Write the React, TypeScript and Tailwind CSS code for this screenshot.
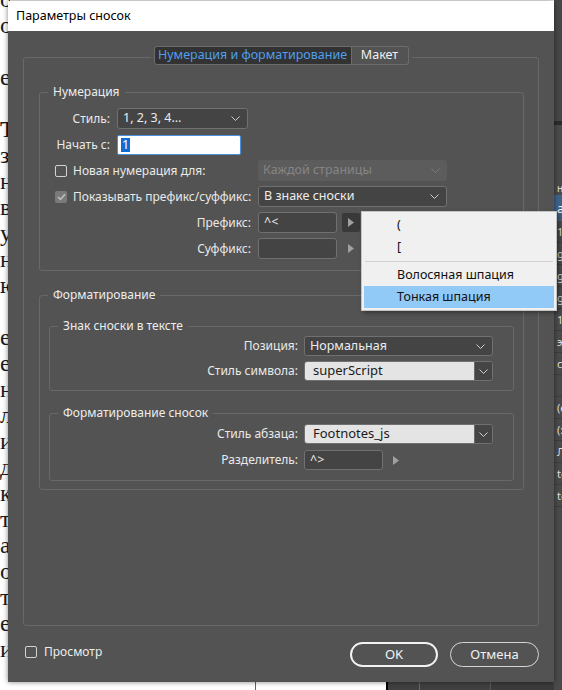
import React from "react";

const FONT = "font-['Noto_Sans','Liberation_Sans',sans-serif]";

function Chevron({ className = "" }: { className?: string }) {
  return (
    <svg width="9" height="5" viewBox="0 0 9 5" className={className}>
      <path d="M0.5 0.5 L4.5 4.5 L8.5 0.5" fill="none" stroke="currentColor" strokeWidth="1" />
    </svg>
  );
}

function Tri({ className = "" }: { className?: string }) {
  return (
    <svg width="6" height="9" viewBox="0 0 6 9" className={className}>
      <path d="M0 0 L6 4.5 L0 9Z" fill="currentColor" />
    </svg>
  );
}

function Select({ value, w, h = "h-[21px]" }: { value: string; w: string; h?: string }) {
  return (
    <div
      className={`${w} ${h} flex items-center justify-between rounded-[3px] border border-[#707070] bg-[#444444] pl-[5px] pr-[7px] text-[#ececec] text-[12.5px]`}
    >
      <span className="whitespace-nowrap">{value}</span>
      <Chevron className="text-[#cfcfcf]" />
    </div>
  );
}

function Combo({ value }: { value: string }) {
  return (
    <div className="w-[189px] h-[20px] flex rounded-[3px] border border-[#707070] overflow-hidden">
      <div className="flex-1 bg-[#e4e4e4] pl-[8px] flex items-center text-[#1b1b1b] text-[13px] whitespace-nowrap">{value}</div>
      <div className="w-[18px] bg-[#454545] border-l border-[#6a6a6a] flex items-center justify-center">
        <Chevron className="text-[#cfcfcf]" />
      </div>
    </div>
  );
}

function Field({ value, w }: { value: string; w: string }) {
  return (
    <div className={`${w} h-[21px] flex items-center rounded-[3px] border border-[#707070] bg-[#444444] pl-[5px] text-[#ececec] text-[12.5px]`}>
      {value}
    </div>
  );
}

function Legend({ children }: { children: React.ReactNode }) {
  return (
    <div className="self-start -mt-[9px] ml-[8px] px-[5px] h-[16px] leading-[16px] bg-[#535353] text-[#ededed] whitespace-nowrap">
      {children}
    </div>
  );
}

function Checkbox({ checked = false }: { checked?: boolean }) {
  if (checked) {
    return (
      <div className="w-[12px] h-[12px] shrink-0 rounded-[2px] bg-[#7a7a7a] flex items-center justify-center">
        <svg width="9" height="8" viewBox="0 0 9 8">
          <path d="M1 4 L3.5 6.5 L8 1.2" fill="none" stroke="#c4c4c4" strokeWidth="1.4" />
        </svg>
      </div>
    );
  }
  return <div className="w-[12px] h-[12px] shrink-0 rounded-[2px] border border-[#d2d2d2]" />;
}

const leftLines: { t: string; bold?: boolean }[] = [
  { t: "о" },
  { t: "о" },
  { t: "" },
  { t: "е" },
  { t: "" },
  { t: "Т", bold: true },
  { t: "з" },
  { t: "н" },
  { t: "в" },
  { t: "у" },
  { t: "н" },
  { t: "ю" },
  { t: "" },
  { t: "е" },
  { t: "е" },
  { t: "н" },
  { t: "л" },
  { t: "и" },
  { t: "д" },
  { t: "к" },
  { t: "т" },
  { t: "а" },
  { t: "о" },
  { t: "т" },
  { t: "е" },
  { t: "и" },
  { t: "" },
];

export default function App() {
  return (
    <div className={`relative w-[562px] h-[690px] overflow-hidden bg-white ${FONT} text-[12px]`}>
      {/* background: document text on the left */}
      <div className="absolute left-0 top-0 w-[10px] h-[690px] overflow-hidden font-['Liberation_Serif',serif] text-[24px] text-[#1c1c1c]">
        <div className="-mt-[14px] flex flex-col">
          {leftLines.map((l, i) => (
            <div key={i} className={`h-[26px] leading-[26px] ${l.bold ? "font-bold" : ""}`}>
              {l.t || "\u00a0"}
            </div>
          ))}
        </div>
      </div>

      {/* background: bottom strip */}
      <div className="absolute left-[255px] top-[676px] w-[1px] h-[14px] bg-[#8b3cc8]" />
      <div className="absolute left-[386px] top-[600px] w-[176px] h-[90px] flex border-l-2 border-black bg-[#404040]">
        <div className="w-[31px]" />
        <div className="w-[1px] bg-[#d23a3a]" />
        <div className="w-[70px]" />
        <div className="flex-1 border-l border-[#5a5a5a] bg-[#3b3b3b]" />
      </div>

      {/* background: right panel */}
      <div className="absolute left-[554px] top-0 w-[8px] h-[690px] flex flex-col bg-[#4a4a4a] text-[11px] text-[#dedede] overflow-hidden">
        <div className="h-[121px] bg-[#474747]" />
        <div className="h-[4px] bg-[#2b2b2b]" />
        <div className="h-[57px]" />
        <div className="h-[13px] pl-[3px] leading-[13px] text-[10px]">н</div>
        <div className="h-[26px] bg-[#3f6289] pl-[3px] leading-[26px] text-[13px] text-white">al</div>
        {["1", "g", "g", "g", "1", "эф", "сı", "", "(е", "(:", "Ле", "te", "te"].map((t, i) => (
          <div key={i} className="h-[22px] leading-[22px] pl-[3px] border-b border-[#3c3c3c]">
            {t}
          </div>
        ))}
      </div>

      {/* dialog */}
      <div className="absolute left-[8px] top-[1px] w-[546px] h-[681px] flex flex-col shadow-[0_0_5px_rgba(0,0,0,0.5)]">
        <div className="h-[30px] bg-white flex items-center pl-[8px] text-[12.5px] text-black">Параметры сносок</div>
        <div className="flex-1 bg-[#535353] px-[15px] flex flex-col">
          {/* tab panel */}
          <div className="mt-[26px] h-[569px] rounded-[3px] border border-[#686868] flex flex-col">
            <div className="self-center -mt-[12px] px-[3px] bg-[#535353] flex">
              <div className="w-[198px] h-[19px] flex items-center justify-center rounded-l-[3px] border border-[#6c6c6c] bg-[#323232] text-[#4f9fec] text-[12.5px] whitespace-nowrap">
                Нумерация и форматирование
              </div>
              <div className="w-[57px] h-[19px] flex items-center justify-center rounded-r-[3px] border border-l-0 border-[#6c6c6c] text-[#f0f0f0] text-[12.5px]">
                Макет
              </div>
            </div>

            {/* Нумерация */}
            <div className="mt-[27px] ml-[15px] mr-[14px] rounded-[3px] border border-[#686868] flex flex-col pb-[11px]">
              <Legend>Нумерация</Legend>
              <div className="mt-[8px] flex flex-col gap-[5px] text-[#e9e9e9] whitespace-nowrap">
                <div className="h-[21px] flex items-center">
                  <div className="w-[70px] text-right">Стиль:</div>
                  <div className="ml-[7px]">
                    <Select value="1, 2, 3, 4..." w="w-[131px]" />
                  </div>
                </div>
                <div className="h-[21px] flex items-center">
                  <div className="w-[70px] text-right">Начать с:</div>
                  <div className="ml-[7px] w-[124px] h-[20px] rounded-[2px] border border-[#4a90dc] bg-white flex items-center pl-[3px] text-[12.5px]">
                    <span className="bg-[#0f6cd4] text-white leading-[14px] px-[1px]">1</span>
                  </div>
                </div>
                <div className="h-[21px] flex items-center">
                  <div className="ml-[15px] w-[203px] flex items-center">
                    <Checkbox />
                    <span className="ml-[6px]">Новая нумерация для:</span>
                  </div>
                  <div className="w-[189px] h-[21px] flex items-center justify-between rounded-[3px] bg-[#5c5c5c] pl-[5px] pr-[7px] text-[#858585] text-[12.5px]">
                    <span>Каждой страницы</span>
                    <Chevron className="text-[#7a7a7a]" />
                  </div>
                </div>
                <div className="h-[21px] flex items-center">
                  <div className="ml-[15px] w-[203px] flex items-center">
                    <Checkbox checked />
                    <span className="ml-[6px]">Показывать префикс/суффикс:</span>
                  </div>
                  <Select value="В знаке сноски" w="w-[189px]" />
                </div>
                <div className="h-[21px] flex items-center">
                  <div className="w-[211px] text-right">Префикс:</div>
                  <div className="ml-[7px]">
                    <Field value="^<" w="w-[79px]" />
                  </div>
                  <div className="ml-[5px] w-[18px] h-[19px] rounded-[2px] bg-[#393939] flex items-center justify-center">
                    <Tri className="text-[#a0a0a0]" />
                  </div>
                </div>
                <div className="h-[21px] flex items-center">
                  <div className="w-[211px] text-right">Суффикс:</div>
                  <div className="ml-[7px]">
                    <Field value="" w="w-[79px]" />
                  </div>
                  <div className="ml-[5px] w-[18px] h-[19px] flex items-center justify-center">
                    <Tri className="text-[#a0a0a0]" />
                  </div>
                </div>
              </div>
            </div>

            {/* Форматирование */}
            <div className="mt-[24px] ml-[15px] mr-[14px] rounded-[3px] border border-[#686868] flex flex-col pb-[8px]">
              <Legend>Форматирование</Legend>

              <div className="mt-[23px] mx-[9px] rounded-[3px] border border-[#686868] flex flex-col pb-[9px] text-[#e9e9e9] whitespace-nowrap">
                <Legend>Знак сноски в тексте</Legend>
                <div className="mt-[2px] flex flex-col gap-[5px]">
                  <div className="h-[20px] flex items-center">
                    <div className="w-[248px] text-right">Позиция:</div>
                    <div className="ml-[6px]">
                      <Select value="Нормальная" w="w-[189px]" h="h-[20px]" />
                    </div>
                  </div>
                  <div className="h-[20px] flex items-center">
                    <div className="w-[248px] text-right">Стиль символа:</div>
                    <div className="ml-[6px]">
                      <Combo value="superScript" />
                    </div>
                  </div>
                </div>
              </div>

              <div className="mt-[22px] mx-[9px] rounded-[3px] border border-[#686868] flex flex-col pb-[10px] text-[#e9e9e9] whitespace-nowrap">
                <Legend>Форматирование сносок</Legend>
                <div className="mt-[3px] flex flex-col gap-[6px]">
                  <div className="h-[20px] flex items-center">
                    <div className="w-[248px] text-right">Стиль абзаца:</div>
                    <div className="ml-[6px]">
                      <Combo value="Footnotes_js" />
                    </div>
                  </div>
                  <div className="h-[20px] flex items-center">
                    <div className="w-[248px] text-right">Разделитель:</div>
                    <div className="ml-[6px] w-[79px] h-[20px] flex items-center rounded-[3px] border border-[#707070] bg-[#444444] pl-[5px] text-[#ececec] text-[12.5px]">
                      ^&gt;
                    </div>
                    <div className="ml-[10px]">
                      <Tri className="text-[#a0a0a0]" />
                    </div>
                  </div>
                </div>
              </div>
            </div>
          </div>

          {/* bottom bar */}
          <div className="mt-[16px] h-[25px] flex items-center">
            <div className="ml-[2px] mb-[5px] flex items-center">
              <Checkbox />
              <span className="ml-[7px] text-[#ededed]">Просмотр</span>
            </div>
            <div className="ml-auto flex gap-[12px]">
              <div className="w-[88px] h-[25px] rounded-full border-2 border-[#f2f2f2] flex items-center justify-center text-[#f4f4f4] text-[13px]">
                OK
              </div>
              <div className="w-[89px] h-[25px] rounded-full border border-[#d6d6d6] flex items-center justify-center text-[#f0f0f0] text-[13px]">
                Отмена
              </div>
            </div>
          </div>
        </div>
      </div>

      {/* popup menu */}
      <div className="absolute left-[361px] top-[211px] w-[196px] h-[100px] bg-[#f0f0f0] border border-[#c4c4c4] shadow-[2px_2px_4px_rgba(0,0,0,0.35)] flex flex-col py-[2px] text-[12.5px] text-[#111]">
        <div className="h-[22px] mx-[2px] pl-[33px] flex items-center">(</div>
        <div className="h-[22px] mx-[2px] pl-[33px] flex items-center">[</div>
        <div className="h-[6px] flex items-center mx-[3px]">
          <div className="h-[1px] w-full bg-[#d2d2d2]" />
        </div>
        <div className="h-[22px] mx-[2px] pl-[33px] flex items-center">Волосяная шпация</div>
        <div className="h-[22px] mx-[2px] pl-[33px] flex items-center bg-[#91c9f7]">Тонкая шпация</div>
      </div>
    </div>
  );
}
